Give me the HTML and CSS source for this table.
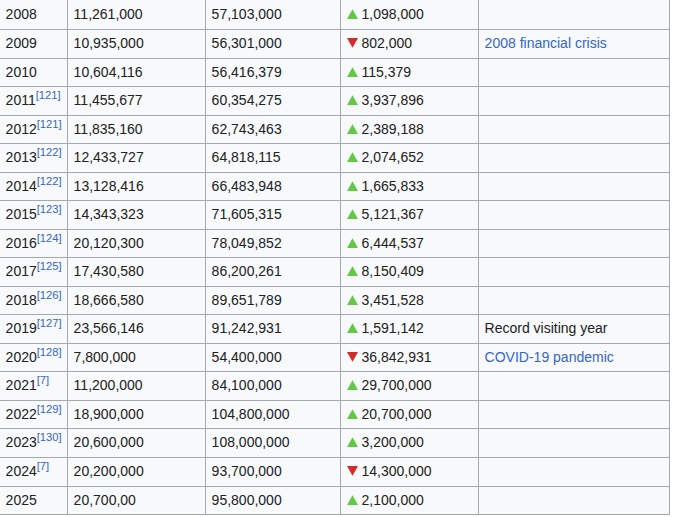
FILE: index.html
```html
<!DOCTYPE html>
<html lang="en">
<head>
<meta charset="utf-8">
<title>Visitors table</title>
<link rel="stylesheet" href="styles.css">
</head>
<body>
<svg class="defs" width="0" height="0" aria-hidden="true">
  <defs>
    <symbol id="up" viewBox="0 0 11 10"><polygon points="5.5,0.2 11,9.9 0,9.9" fill="#62c845"/></symbol>
    <symbol id="down" viewBox="0 0 11 10"><polygon points="0,0.1 11,0.1 5.5,9.8" fill="#d42a2a"/></symbol>
  </defs>
</svg>
<table class="wikitable">
  <tbody>
    <tr class="first">
      <td class="c1">2008</td><td class="c2">11,261,000</td><td class="c3">57,103,000</td>
      <td class="c4"><svg class="tri"><use href="#up"/></svg> 1,098,000</td><td class="c5"></td>
    </tr>
    <tr>
      <td>2009</td><td>10,935,000</td><td>56,301,000</td>
      <td><svg class="tri"><use href="#down"/></svg> 802,000</td><td><a href="#">2008 financial crisis</a></td>
    </tr>
    <tr>
      <td>2010</td><td>10,604,116</td><td>56,416,379</td>
      <td><svg class="tri"><use href="#up"/></svg> 115,379</td><td></td>
    </tr>
    <tr>
      <td>2011<sup><a href="#">[121]</a></sup></td><td>11,455,677</td><td>60,354,275</td>
      <td><svg class="tri"><use href="#up"/></svg> 3,937,896</td><td></td>
    </tr>
    <tr>
      <td>2012<sup><a href="#">[121]</a></sup></td><td>11,835,160</td><td>62,743,463</td>
      <td><svg class="tri"><use href="#up"/></svg> 2,389,188</td><td></td>
    </tr>
    <tr>
      <td>2013<sup><a href="#">[122]</a></sup></td><td>12,433,727</td><td>64,818,115</td>
      <td><svg class="tri"><use href="#up"/></svg> 2,074,652</td><td></td>
    </tr>
    <tr>
      <td>2014<sup><a href="#">[122]</a></sup></td><td>13,128,416</td><td>66,483,948</td>
      <td><svg class="tri"><use href="#up"/></svg> 1,665,833</td><td></td>
    </tr>
    <tr>
      <td>2015<sup><a href="#">[123]</a></sup></td><td>14,343,323</td><td>71,605,315</td>
      <td><svg class="tri"><use href="#up"/></svg> 5,121,367</td><td></td>
    </tr>
    <tr>
      <td>2016<sup><a href="#">[124]</a></sup></td><td>20,120,300</td><td>78,049,852</td>
      <td><svg class="tri"><use href="#up"/></svg> 6,444,537</td><td></td>
    </tr>
    <tr>
      <td>2017<sup><a href="#">[125]</a></sup></td><td>17,430,580</td><td>86,200,261</td>
      <td><svg class="tri"><use href="#up"/></svg> 8,150,409</td><td></td>
    </tr>
    <tr>
      <td>2018<sup><a href="#">[126]</a></sup></td><td>18,666,580</td><td>89,651,789</td>
      <td><svg class="tri"><use href="#up"/></svg> 3,451,528</td><td></td>
    </tr>
    <tr>
      <td>2019<sup><a href="#">[127]</a></sup></td><td>23,566,146</td><td>91,242,931</td>
      <td><svg class="tri"><use href="#up"/></svg> 1,591,142</td><td>Record visiting year</td>
    </tr>
    <tr>
      <td>2020<sup><a href="#">[128]</a></sup></td><td>7,800,000</td><td>54,400,000</td>
      <td><svg class="tri"><use href="#down"/></svg> 36,842,931</td><td><a href="#">COVID-19 pandemic</a></td>
    </tr>
    <tr>
      <td>2021<sup><a href="#">[7]</a></sup></td><td>11,200,000</td><td>84,100,000</td>
      <td><svg class="tri"><use href="#up"/></svg> 29,700,000</td><td></td>
    </tr>
    <tr>
      <td>2022<sup><a href="#">[129]</a></sup></td><td>18,900,000</td><td>104,800,000</td>
      <td><svg class="tri"><use href="#up"/></svg> 20,700,000</td><td></td>
    </tr>
    <tr>
      <td>2023<sup><a href="#">[130]</a></sup></td><td>20,600,000</td><td>108,000,000</td>
      <td><svg class="tri"><use href="#up"/></svg> 3,200,000</td><td></td>
    </tr>
    <tr>
      <td>2024<sup><a href="#">[7]</a></sup></td><td>20,200,000</td><td>93,700,000</td>
      <td><svg class="tri"><use href="#down"/></svg> 14,300,000</td><td></td>
    </tr>
    <tr>
      <td>2025</td><td>20,700,00</td><td>95,800,000</td>
      <td><svg class="tri"><use href="#up"/></svg> 2,100,000</td><td></td>
    </tr>
  </tbody>
</table>
</body>
</html>
```
FILE: styles.css
```css
html, body {
  margin: 0;
  padding: 0;
  background: #ffffff;
}

body {
  font-family: "Liberation Sans", Arial, sans-serif;
  font-size: 14px;
  color: #202122;
  overflow: hidden;
}

.defs {
  position: absolute;
  width: 0;
  height: 0;
}

.wikitable {
  border-collapse: separate;
  border-spacing: 0;
  table-layout: fixed;
  width: 671px;
  margin-left: -1px;
  border-left: 1px solid #a2a9b1;
  background: #f8f9fa;
}

.wikitable td {
  box-sizing: border-box;
  padding: 3px 5.6px;
  line-height: 21.53px;
  vertical-align: middle;
  white-space: nowrap;
  border-right: 1px solid #a2a9b1;
  border-bottom: 1px solid #a2a9b1;
}

.wikitable tr.first td {
  padding-top: 4.47px;
}

.c1 { width: 68px; }
.c2 { width: 138px; }
.c3 { width: 135px; }
.c4 { width: 138px; }
.c5 { width: 191px; }

.wikitable a {
  color: #3366cc;
  text-decoration: none;
}

.wikitable sup {
  font-size: 80%;
  line-height: 1;
  vertical-align: super;
}

.tri {
  width: 11px;
  height: 10px;
  vertical-align: baseline;
}
```
